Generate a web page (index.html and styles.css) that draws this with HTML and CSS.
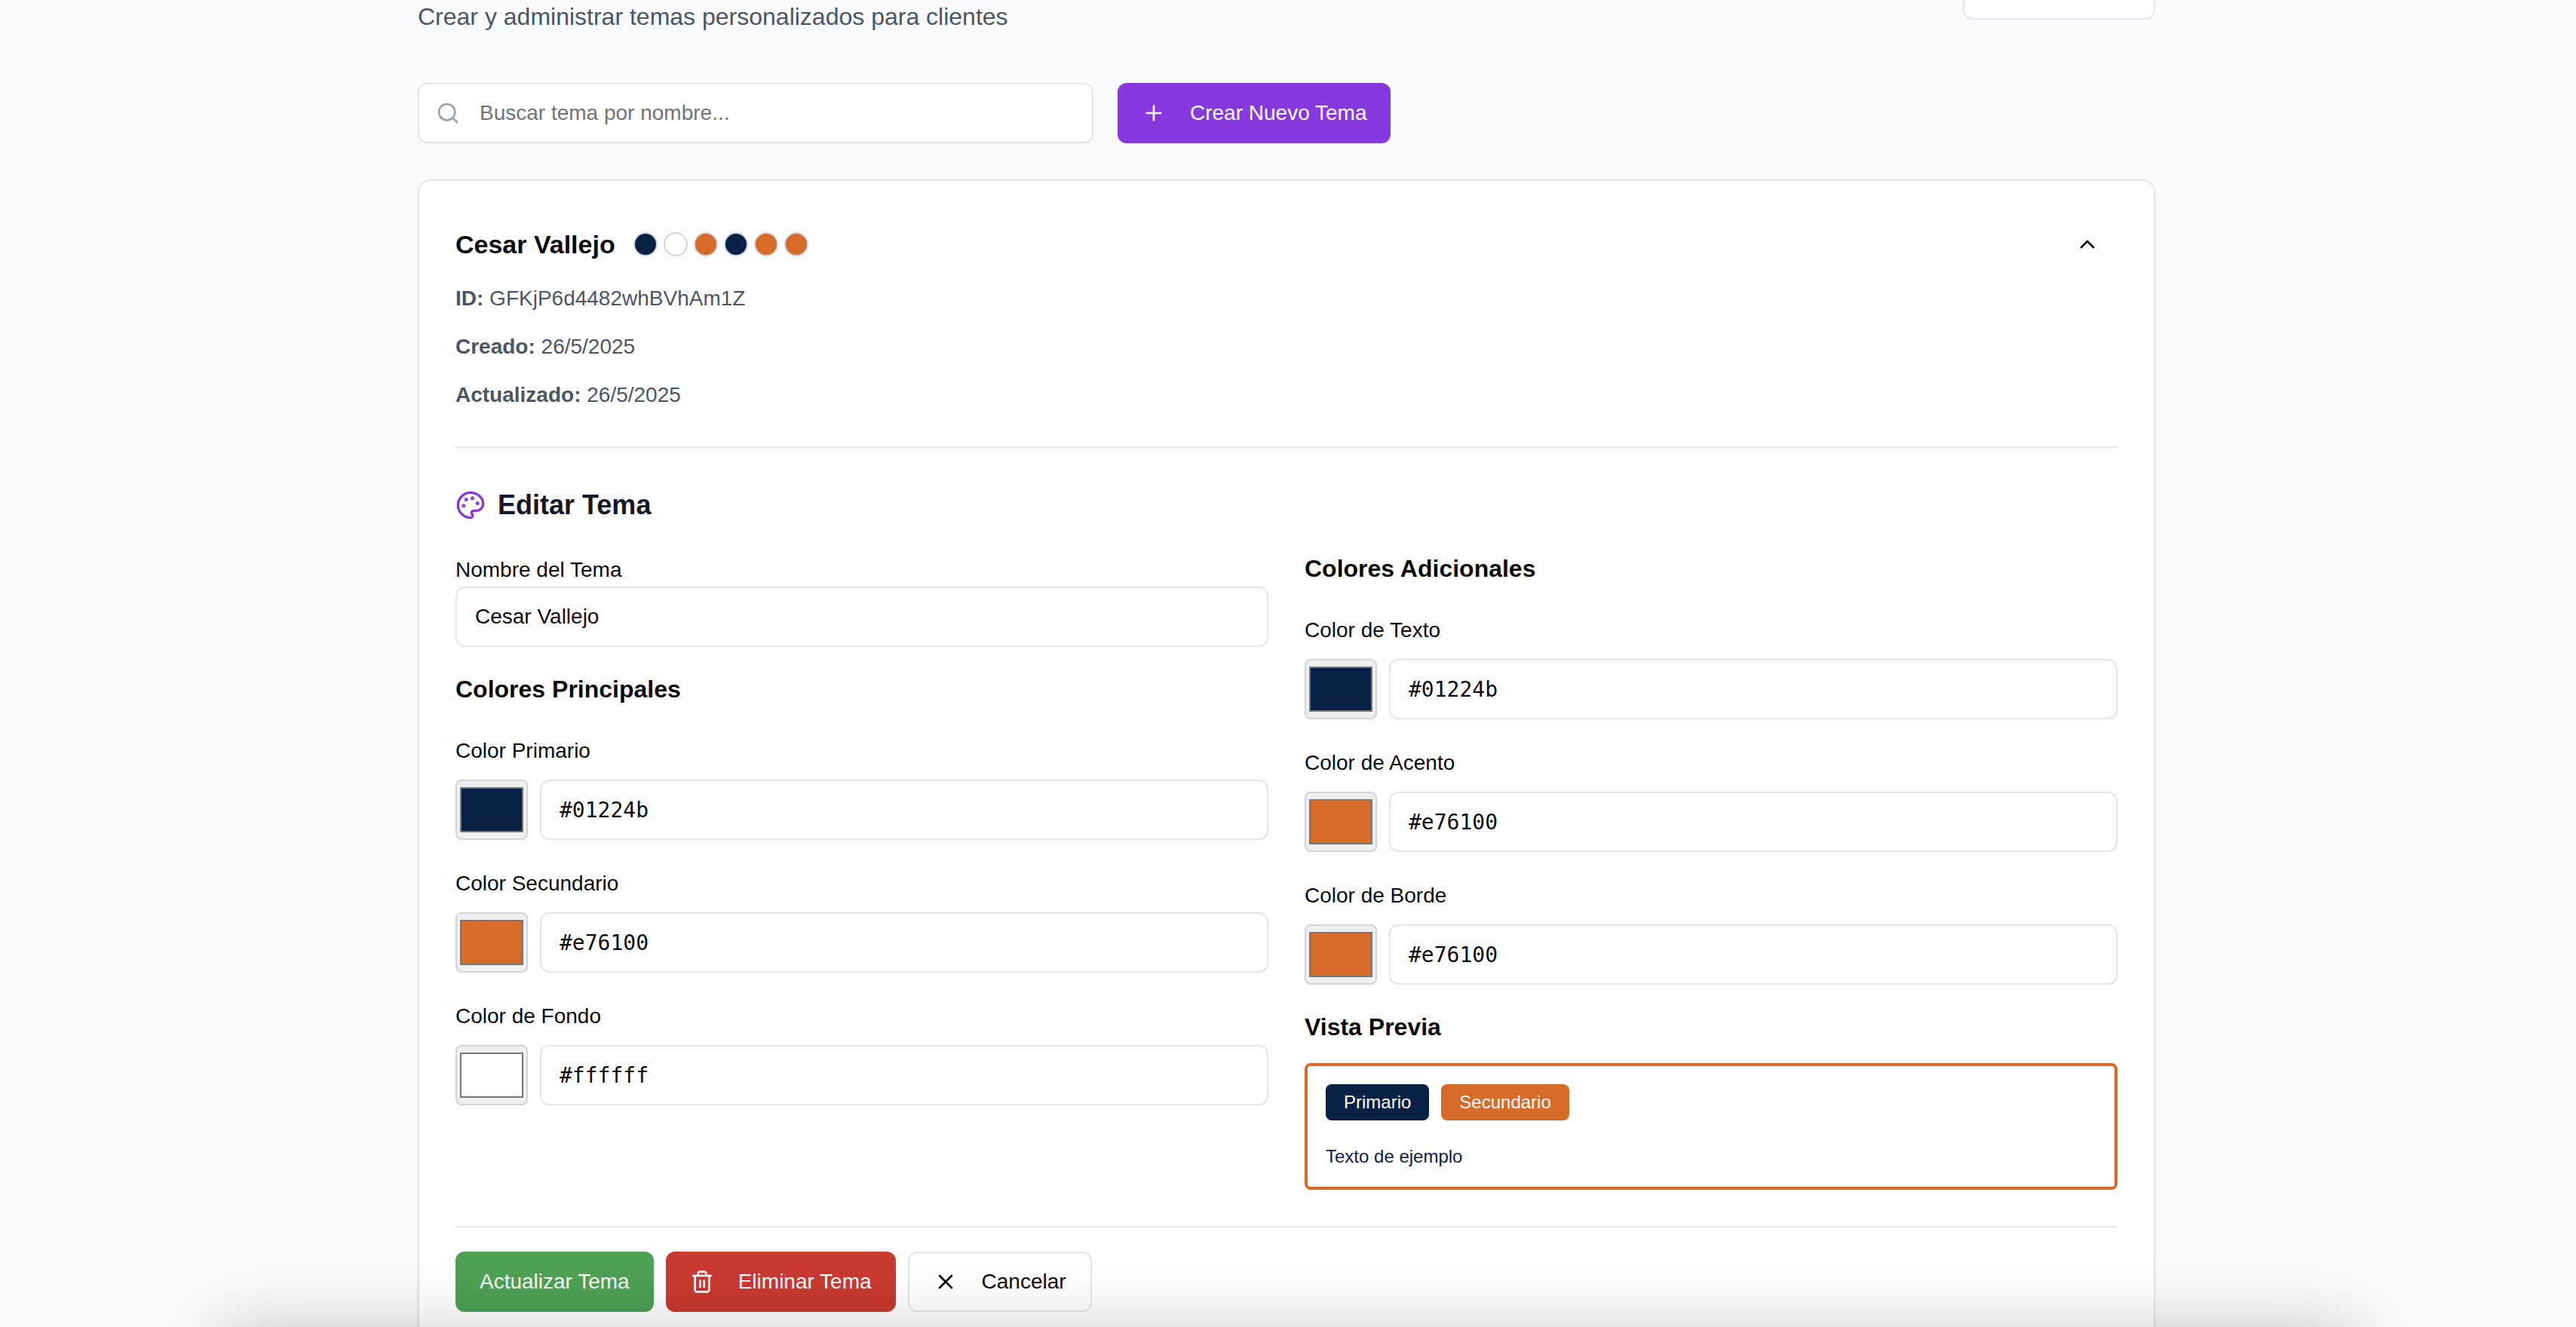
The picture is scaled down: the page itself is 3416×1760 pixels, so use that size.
FILE: index.html
```html
<!DOCTYPE html>
<html lang="es">
<head>
<meta charset="utf-8">
<meta name="viewport" content="width=device-width, initial-scale=1">
<title>Temas personalizados</title>
<link rel="stylesheet" href="styles.css">
</head>
<body>
<div class="viewport">
  <main class="container">
    <header class="page-header">
      <p class="subtitle">Crear y administrar temas personalizados para clientes</p>
      <button type="button" class="btn btn-outline btn-nav" aria-label="Volver"></button>
    </header>

    <div class="toolbar">
      <div class="search">
        <svg class="icon search-icon" viewBox="0 0 24 24" aria-hidden="true"><circle cx="11" cy="11" r="8"/><path d="m21 21-4.3-4.3"/></svg>
        <input class="field search-field" type="text" aria-label="Buscar tema" placeholder="Buscar tema por nombre...">
      </div>
      <button type="button" class="btn btn-purple">
        <svg class="icon" viewBox="0 0 24 24" aria-hidden="true"><path d="M5 12h14"/><path d="M12 5v14"/></svg>
        Crear Nuevo Tema
      </button>
    </div>

    <section class="card">
      <div class="card-header">
        <h2 class="theme-name">Cesar Vallejo</h2>
        <div class="dots">
          <span class="dot navy"></span>
          <span class="dot white"></span>
          <span class="dot orange"></span>
          <span class="dot navy"></span>
          <span class="dot orange"></span>
          <span class="dot orange"></span>
        </div>
        <button type="button" class="btn-toggle" aria-label="Contraer">
          <svg class="icon" viewBox="0 0 24 24" aria-hidden="true"><path d="m18 15-6-6-6 6"/></svg>
        </button>
      </div>

      <div class="meta">
        <p><strong>ID:</strong> GFKjP6d4482whBVhAm1Z</p>
        <p><strong>Creado:</strong> 26/5/2025</p>
        <p><strong>Actualizado:</strong> 26/5/2025</p>
      </div>

      <form class="editor">
        <h3 class="editor-title">
          <svg class="icon icon-palette" viewBox="0 0 24 24" aria-hidden="true"><circle class="spot" cx="13.5" cy="6.5" r=".5"/><circle class="spot" cx="17.5" cy="10.5" r=".5"/><circle class="spot" cx="8.5" cy="7.5" r=".5"/><circle class="spot" cx="6.5" cy="12.5" r=".5"/><path d="M12 2C6.5 2 2 6.5 2 12s4.5 10 10 10c.926 0 1.648-.746 1.648-1.688 0-.437-.18-.835-.437-1.125-.29-.289-.438-.652-.438-1.125a1.64 1.64 0 0 1 1.668-1.668h1.996c3.051 0 5.555-2.503 5.555-5.554C21.965 6.012 17.461 2 12 2z"/></svg>
          Editar Tema
        </h3>

        <div class="columns">
          <div class="column">
            <div class="name-group">
              <label for="name">Nombre del Tema</label>
              <input class="field" id="name" type="text" value="Cesar Vallejo">
            </div>
            <h4>Colores Principales</h4>
            <div class="color-group">
              <label for="primary">Color Primario</label>
              <div class="color-row">
                <input class="picker" type="color" aria-label="Elegir color primario" value="#0a2146">
                <input class="field mono" id="primary" type="text" value="#01224b">
              </div>
            </div>
            <div class="color-group">
              <label for="secondary">Color Secundario</label>
              <div class="color-row">
                <input class="picker" type="color" aria-label="Elegir color secundario" value="#d66a29">
                <input class="field mono" id="secondary" type="text" value="#e76100">
              </div>
            </div>
            <div class="color-group">
              <label for="background">Color de Fondo</label>
              <div class="color-row">
                <input class="picker" type="color" aria-label="Elegir color de fondo" value="#ffffff">
                <input class="field mono" id="background" type="text" value="#ffffff">
              </div>
            </div>
          </div>

          <div class="column">
            <h4>Colores Adicionales</h4>
            <div class="color-group">
              <label for="text">Color de Texto</label>
              <div class="color-row">
                <input class="picker" type="color" aria-label="Elegir color de texto" value="#0a2146">
                <input class="field mono" id="text" type="text" value="#01224b">
              </div>
            </div>
            <div class="color-group">
              <label for="accent">Color de Acento</label>
              <div class="color-row">
                <input class="picker" type="color" aria-label="Elegir color de acento" value="#d66a29">
                <input class="field mono" id="accent" type="text" value="#e76100">
              </div>
            </div>
            <div class="color-group">
              <label for="border">Color de Borde</label>
              <div class="color-row">
                <input class="picker" type="color" aria-label="Elegir color de borde" value="#d66a29">
                <input class="field mono" id="border" type="text" value="#e76100">
              </div>
            </div>
            <div class="preview-group">
              <h4>Vista Previa</h4>
              <div class="preview">
                <div class="preview-buttons">
                  <button type="button" class="chip navy">Primario</button>
                  <button type="button" class="chip orange">Secundario</button>
                </div>
                <p class="preview-text">Texto de ejemplo</p>
              </div>
            </div>
          </div>
        </div>

        <div class="actions">
          <button type="button" class="btn btn-green">Actualizar Tema</button>
          <button type="button" class="btn btn-red">
            <svg class="icon" viewBox="0 0 24 24" aria-hidden="true"><path d="M3 6h18"/><path d="M19 6v14c0 1-1 2-2 2H7c-1 0-2-1-2-2V6"/><path d="M8 6V4c0-1 1-2 2-2h4c1 0 2 1 2 2v2"/><path d="M10 11v6"/><path d="M14 11v6"/></svg>
            Eliminar Tema
          </button>
          <button type="button" class="btn btn-outline">
            <svg class="icon" viewBox="0 0 24 24" aria-hidden="true"><path d="M18 6 6 18"/><path d="m6 6 12 12"/></svg>
            Cancelar
          </button>
        </div>
      </form>
    </section>
  </main>
</div>
<div class="bottom-shade"></div>
</body>
</html>
```
FILE: styles.css
```css
:root {
  --navy: #0a2146;
  --orange: #d66a29;
  --line: #e5e5e5;
  --ink: #0a0a0a;
}

* {
  box-sizing: border-box;
}

body {
  margin: 0;
  background: #f9fafb;
  color: var(--ink);
  font-family: "Liberation Sans", Arial, sans-serif;
  font-size: 32px;
  line-height: 48px;
}

h2, h3, h4, p {
  margin: 0;
}

button, input {
  font: inherit;
  color: inherit;
}

.viewport {
  height: 100vh;
  padding-right: 4px;
  overflow: hidden;
}

.container {
  max-width: 2304px;
  margin: -74px auto 0;
}

.icon {
  width: 32px;
  height: 32px;
  flex: none;
  fill: none;
  stroke: currentColor;
  stroke-width: 2;
  stroke-linecap: round;
  stroke-linejoin: round;
}

/* Header and toolbar */
.page-header {
  display: flex;
  justify-content: space-between;
  align-items: center;
  min-height: 120px;
  margin-bottom: 64px;
}

.subtitle {
  align-self: flex-end;
  color: #4b5563;
}

.toolbar {
  display: flex;
  gap: 32px;
  margin-bottom: 48px;
}

.search {
  position: relative;
  flex: 0 1 896px;
}

.search-icon {
  position: absolute;
  top: 24px;
  left: 24px;
  color: #9ca3af;
}

.field {
  display: block;
  width: 100%;
  height: 80px;
  padding: 0 24px;
  border: 2px solid var(--line);
  border-radius: 12px;
  background: #fff;
  font-size: 28px;
}

.search-field {
  padding-left: 80px;
}

.field::placeholder {
  color: #737373;
  opacity: 1;
}

.mono {
  font-family: "DejaVu Sans Mono", monospace;
}

.btn {
  display: inline-flex;
  align-items: center;
  justify-content: center;
  gap: 32px;
  height: 80px;
  padding: 0 32px;
  border: 0;
  border-radius: 12px;
  color: #fafafa;
  font-size: 28px;
  line-height: 40px;
  white-space: nowrap;
}

.btn-purple { background: #8639df; }
.btn-green { background: #4da154; }
.btn-red { background: #c93a31; }

.btn-outline {
  border: 2px solid var(--line);
  background: #fff;
  color: var(--ink);
}

.btn-nav {
  width: 255px;
}

/* Theme card */
.card {
  padding: 48px;
  border: 2px solid var(--line);
  border-radius: 16px;
  background: #fff;
  box-shadow: 0 2px 4px rgba(0, 0, 0, 0.05);
}

.card-header {
  display: flex;
  align-items: center;
  gap: 24px;
  margin-bottom: 16px;
}

.theme-name {
  font-size: 34px;
}

.dots {
  display: flex;
  gap: 8px;
}

.dot {
  width: 32px;
  height: 32px;
  border: 2px solid #d1d5db;
  border-radius: 50%;
}

.navy { background: var(--navy); }
.orange { background: var(--orange); }
.white { background: #fff; }

.btn-toggle {
  display: flex;
  align-items: center;
  height: 72px;
  margin-left: auto;
  padding: 0 24px;
  border: 0;
  background: none;
}

.meta {
  display: grid;
  gap: 24px;
  color: #4b5563;
  font-size: 28px;
  line-height: 40px;
}

/* Editor */
.editor {
  margin-top: 48px;
  padding-top: 48px;
  border-top: 2px solid #e5e7eb;
}

.editor-title {
  display: flex;
  align-items: center;
  gap: 16px;
  margin-bottom: 32px;
  color: #111827;
  font-size: 36px;
  line-height: 56px;
}

.icon-palette {
  width: 40px;
  height: 40px;
  color: #8639df;
}

.spot {
  fill: currentColor;
}

.columns {
  display: grid;
  grid-template-columns: 1fr 1fr;
  gap: 48px;
}

.column {
  display: flex;
  flex-direction: column;
  gap: 32px;
}

h4 {
  font-size: 32px;
}

label {
  display: block;
  padding-top: 4px;
  font-size: 28px;
  line-height: 44px;
}

.color-group {
  display: grid;
  gap: 16px;
}

.color-row {
  display: flex;
  gap: 16px;
}

.picker {
  flex: none;
  width: 96px;
  height: 80px;
  padding: 8px 4px;
  border: 2px solid #d1d5db;
  border-radius: 8px;
  background: #efefef;
}

.picker::-webkit-color-swatch-wrapper {
  padding: 0;
}

.picker::-webkit-color-swatch {
  border: 2px solid #777;
  border-radius: 0;
}

.preview-group {
  display: grid;
  gap: 24px;
}

.preview {
  display: grid;
  gap: 32px;
  padding: 24px;
  border: 4px solid var(--orange);
  border-radius: 8px;
  font-size: 24px;
  line-height: 32px;
}

.preview-buttons {
  display: flex;
  gap: 16px;
}

.chip {
  padding: 8px 24px;
  border: 0;
  border-radius: 8px;
  color: #fff;
}

.preview-text {
  color: var(--navy);
}

.actions {
  display: flex;
  gap: 16px;
  margin-top: 48px;
  padding-top: 32px;
  border-top: 2px solid #e5e7eb;
}

/* Soft shade that rises from below the window's lower edge */
.bottom-shade {
  position: fixed;
  top: 100%;
  left: 290px;
  right: 290px;
  height: 200px;
  box-shadow: 0 0 90px rgba(0, 0, 0, 0.2);
  pointer-events: none;
}
```
